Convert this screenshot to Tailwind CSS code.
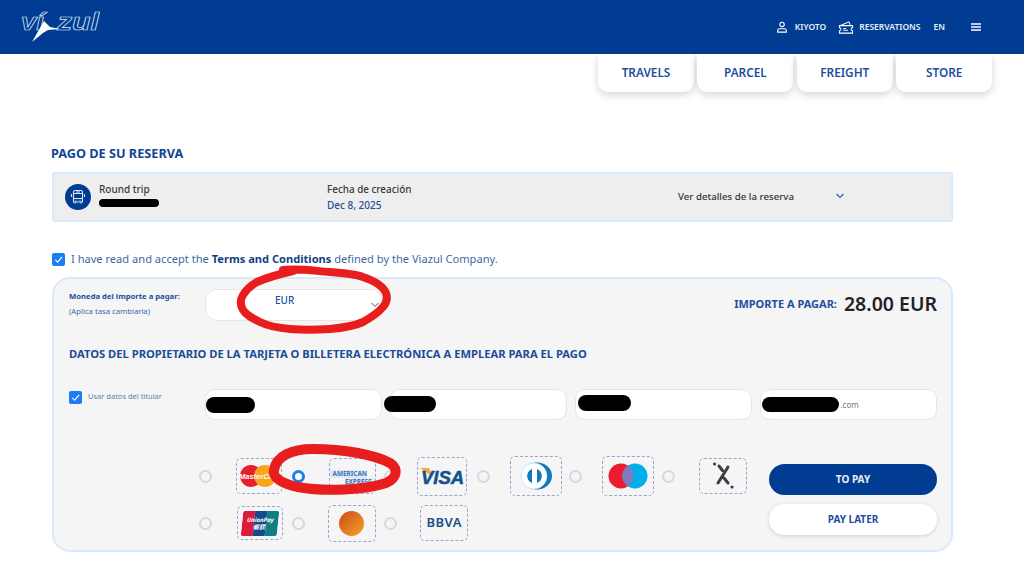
<!doctype html>
<html lang="en">
<head>
<meta charset="utf-8">
<script src="https://cdn.jsdelivr.net/npm/@tailwindcss/browser@4"></script>
<title>Viazul</title>
</head>
<body class="relative h-[573px] w-[1024px] overflow-hidden bg-white font-['Noto_Sans',sans-serif]">
<header class="flex h-[54px] items-center justify-between bg-[#003d92] pl-[20px] pr-[43px] text-white">
  <svg class="mt-[-2px] h-[34px] w-[80px]" viewBox="0 0 80 34">
    <text x="1" y="21" font-family="Liberation Sans" font-style="italic" font-weight="700" font-size="24" textLength="23" lengthAdjust="spacingAndGlyphs" fill="none" stroke="#dfe8f5" stroke-width=".7">ví</text>
    <text x="37" y="21" font-family="Liberation Sans" font-style="italic" font-weight="700" font-size="24" textLength="42" lengthAdjust="spacingAndGlyphs" fill="none" stroke="#dfe8f5" stroke-width=".7">zul</text>
    <path d="M12 33 L24 12 L30 18 L40 20 L28 21 L23 24 Z" fill="#fff"/>
  </svg>
  <div class="flex items-center text-[8.500px] font-semibold text-[#e8eef8]">
    <svg class="h-[12px] w-[12px]" viewBox="0 0 14 14" fill="none" stroke="#fff" stroke-width="1.3"><circle cx="7" cy="4" r="2.6"/><path d="M2 13V11q0-2 2-2h6q2 0 2 2v2z"/></svg>
    <span class="ml-[7px]">KIYOTO</span>
    <svg class="ml-[12px] h-[15px] w-[16px]" viewBox="0 0 16 16" fill="none" stroke="#fff" stroke-width="1.1"><path d="M1 6.500 11 2l1.500 3"/><path d="M1 6h14v2.200a1.600 1.600 0 0 0 0 3.200V14H1v-2.600a1.600 1.600 0 0 0 0-3.200z"/><path d="M5 9h3M5 11h5"/></svg>
    <span class="ml-[5px]">RESERVATIONS</span>
    <span class="ml-[13px]">EN</span>
    <svg class="ml-[26px] h-[10px] w-[10px]" viewBox="0 0 10 10" fill="none" stroke="#fff" stroke-width="1.300"><path d="M0 2h10M0 5h10M0 8h10"/></svg>
  </div>
</header>

<nav class="ml-[598px] flex gap-[3.400px] text-[11.800px] font-semibold text-[#1d4f9c]">
  <a class="flex h-[38px] w-[96px] items-center justify-center rounded-b-[10px] bg-white shadow-[0_3px_8px_rgba(0,0,0,0.16)]">TRAVELS</a>
  <a class="flex h-[38px] w-[96px] items-center justify-center rounded-b-[10px] bg-white shadow-[0_3px_8px_rgba(0,0,0,0.16)]">PARCEL</a>
  <a class="flex h-[38px] w-[96px] items-center justify-center rounded-b-[10px] bg-white shadow-[0_3px_8px_rgba(0,0,0,0.16)]">FREIGHT</a>
  <a class="flex h-[38px] w-[96px] items-center justify-center rounded-b-[10px] bg-white shadow-[0_3px_8px_rgba(0,0,0,0.16)]">STORE</a>
</nav>

<main class="mx-[52px] w-[901px]">
  <h1 class="mt-[52px] ml-[-1px] text-[12.700px] leading-[18px] font-bold text-[#0f4594]">PAGO DE SU RESERVA</h1>

  <section class="mt-[10px] flex h-[50px] items-center rounded-[3px] border-2 border-[#d9eafc] bg-[#eeeeee] pl-[11px] text-[10px]">
    <span class="flex h-[26px] w-[26px] items-center justify-center rounded-full bg-[#003d92]">
      <svg class="h-[16px] w-[16px]" viewBox="0 0 16 16" fill="none" stroke="#dce7f5" stroke-width="1.100"><path d="M3.500 3q0-1.500 1.500-1.500h6q1.500 0 1.500 1.500v10h-9z"/><path d="M3.500 4.500h9M3.500 9.500h9M6 3h4M1.500 5v3M14.500 5v3M5 13v1.500M11 13v1.500M5.500 11.300h1M9.500 11.300h1"/></svg>
    </span>
    <div class="ml-[8px] w-[228px] leading-[15px]">
      <p class="mt-[1px] font-medium text-[#3a3a3a]">Round trip</p>
      <p class="mt-[2px] h-[15px]"><span class="mt-[2px] block h-[8px] w-[60px] rounded-full bg-black"></span></p>
    </div>
    <div class="w-[351px] leading-[15px]">
      <p class="text-[9.900px] font-medium text-[#3a3a3a]">Fecha de creación</p>
      <p class="mt-[1px] font-medium text-[#1d4f9c]">Dec 8, 2025</p>
    </div>
    <span class="w-[157px] text-[9.700px] font-medium text-[#333]">Ver detalles de la reserva</span>
    <svg class="mt-[-2px] h-[8px] w-[10px]" viewBox="0 0 10 8" fill="none" stroke="#2a62ad" stroke-width="1.200"><path d="m1.500 2 3.500 3.500L8.500 2"/></svg>
  </section>

  <label class="mt-[29px] flex h-[16px] items-center text-[11.100px] text-[#3d689f]">
    <span class="flex h-[13px] w-[13px] items-center justify-center rounded-[2px] bg-[#1a7ff5]"><svg class="h-[9px] w-[9px]" viewBox="0 0 10 10" fill="none" stroke="#fff" stroke-width="1.300"><path d="m1.500 5.500 2.500 2.500 5-6"/></svg></span>
    <span class="ml-[6px]">I have read and accept the <b class="font-bold text-[#123f84]">Terms and Conditions</b> defined by the Viazul Company.</span>
  </label>

  <section class="mt-[10px] h-[275px] rounded-[18px] border-2 border-[#d9eafc] bg-[#f5f5f5] pl-[15px] pr-[14px] pt-[7px]">
    <div class="flex h-[35px] items-center">
      <div class="w-[136px] text-[7.700px] leading-[15px] text-[#376aa8]">
        <p class="font-bold text-[#1d4f9c]">Moneda del importe a pagar:</p>
        <p>(Aplica tasa cambiaria)</p>
      </div>
      <div class="relative mt-[3px] flex h-[32px] w-[178px] items-center rounded-[12px] border border-[#e6e6e6] bg-white pl-[69px] text-[10px] font-medium text-[#1d4f9c]">
        <span class="mt-[-9px]">EUR</span>
        <svg class="absolute right-[2px] top-[11px] h-[8px] w-[10px]" viewBox="0 0 10 8" fill="none" stroke="#555" stroke-width="1"><path d="m1.500 2 3.500 3.500L8.500 2"/></svg>
      </div>
      <div class="ml-auto flex items-center">
        <span class="mt-[1px] text-[11px] font-bold text-[#1d4f9c]">IMPORTE A PAGAR:</span>
        <span class="ml-[7px] text-[19.500px] leading-[24px] font-semibold text-[#222]">28.00 EUR</span>
      </div>
    </div>

    <h2 class="mt-[25px] text-[11.200px] leading-[16px] font-bold text-[#1a4c98]">DATOS DEL PROPIETARIO DE LA TARJETA O BILLETERA ELECTRÓNICA A EMPLEAR PARA EL PAGO</h2>

    <div class="mt-[27px] flex h-[31px]">
      <label class="flex h-[16px] w-[136px] items-center text-[7.500px] text-[#5a80b0]">
        <span class="flex h-[13px] w-[13px] items-center justify-center rounded-[2px] bg-[#1a7ff5]"><svg class="h-[9px] w-[9px]" viewBox="0 0 10 10" fill="none" stroke="#fff" stroke-width="1.300"><path d="m1.500 5.500 2.500 2.500 5-6"/></svg></span>
        <span class="ml-[6px]">Usar datos del titular</span>
      </label>
      <div class="grid w-[732px] grid-cols-4 gap-[8.600px]">
        <div class="flex items-center rounded-[10px] border border-[#e6e6e6] bg-white"><span class="block h-[16px] w-[49px] rounded-full bg-black"></span></div>
        <div class="flex items-center rounded-[10px] border border-[#e6e6e6] bg-white"><span class="ml-[-7px] mt-[-1px] block h-[16px] w-[52px] rounded-full bg-black"></span></div>
        <div class="flex items-center rounded-[10px] border border-[#e6e6e6] bg-white"><span class="ml-[2px] mt-[-4px] block h-[16px] w-[53px] rounded-full bg-black"></span></div>
        <div class="flex items-center rounded-[10px] border border-[#e6e6e6] bg-white text-[8px] text-[#777]"><span class="ml-[1px] block h-[15px] w-[77px] rounded-full bg-black"></span><span class="ml-[1px]">.com</span></div>
      </div>
    </div>

    <div class="flex">
      <div class="ml-[130px] mt-[36px] grid w-[556px] grid-cols-[repeat(6,92.600px)] grid-rows-[40px_34px] gap-y-[10px]">
        <div class="flex items-center"><span class="h-[13px] w-[13px] rounded-full border-2 border-[#d5d9de]"></span>
          <span class="ml-[24px] flex h-[36px] w-[46px] items-center justify-center rounded-[5px] border border-dashed border-[#98a3d6]">
            <svg class="h-[24px] w-[44px]" viewBox="0 0 44 24"><circle cx="14" cy="12" r="11" fill="#e5202e"/><circle cx="28" cy="12" r="11" fill="#f9a51a"/><text x="2" y="15" font-family="Liberation Sans" font-size="7.500" font-style="italic" font-weight="700" fill="#fff">MasterCard</text></svg>
          </span></div>
        <div class="flex items-center"><span class="h-[13px] w-[13px] rounded-full border-[3px] border-[#1a7ff5] bg-white"></span>
          <span class="ml-[24px] flex h-[36px] w-[47px] flex-col items-center justify-center rounded-[5px] border border-dashed border-[#98a3d6] pt-[4px] text-[6.400px] leading-[8px] font-bold text-[#3f74b8]">
            <span class="self-start bg-[#dfe8f4] pl-[3px]">AMERICAN</span><span class="self-end bg-[#dfe8f4] pr-[3px]">EXPRESS</span>
          </span></div>
        <div class="flex items-center"><span class="h-[13px] w-[13px] rounded-full border-2 border-[#d5d9de]"></span>
          <span class="ml-[20px] flex h-[39px] w-[50px] items-center justify-center rounded-[5px] border border-dashed border-[#98a3d6]">
            <svg class="h-[22px] w-[46px]" viewBox="0 0 46 22"><path d="M1 3h9l4 9z" fill="#f2a83a"/><text x="2" y="19" font-family="Liberation Sans" font-size="18.500" font-style="italic" font-weight="700" fill="#14508f" stroke="#14508f" stroke-width=".5">VISA</text></svg>
          </span></div>
        <div class="flex items-center"><span class="h-[13px] w-[13px] rounded-full border-2 border-[#d5d9de]"></span>
          <span class="ml-[20px] flex h-[40px] w-[52px] items-center justify-center rounded-[5px] border border-dashed border-[#98a3d6]">
            <svg class="h-[28px] w-[32px]" viewBox="0 0 32 28"><ellipse cx="17" cy="14" rx="15" ry="13.500" fill="#0f79ba"/><circle cx="14" cy="14" r="13" fill="#fff" stroke="#b9d8ea" stroke-width=".6"/><path d="M12 7a7.500 7.500 0 0 0 0 14zM17 7a7.500 7.500 0 0 1 0 14z" fill="#0f79ba"/></svg>
          </span></div>
        <div class="flex items-center"><span class="h-[13px] w-[13px] rounded-full border-2 border-[#d5d9de]"></span>
          <span class="ml-[20px] flex h-[40px] w-[52px] items-center justify-center rounded-[5px] border border-dashed border-[#98a3d6]">
            <svg class="h-[26px] w-[40px]" viewBox="0 0 40 26"><circle cx="13" cy="13" r="12.500" fill="#eb1c2d"/><circle cx="27" cy="13" r="12.500" fill="#00aeea"/><path d="M20 2.500a12.500 12.500 0 0 1 0 21 12.500 12.500 0 0 1 0-21z" fill="#7e7cbd"/></svg>
          </span></div>
        <div class="flex items-center"><span class="h-[13px] w-[13px] rounded-full border-2 border-[#d5d9de]"></span>
          <span class="ml-[24px] flex h-[36px] w-[48px] items-center justify-center rounded-[5px] border border-dashed border-[#98a3d6]">
            <svg class="h-[34px] w-[46px]" viewBox="699 460 46 34" fill="none" stroke="#3d3d42" stroke-linecap="round" stroke-width="3"><path d="M713.500 465h.1M718 467l3.500 4.500M717 484l10-16M723 479l4 5M731 488h.1"/></svg>
          </span></div>

        <div class="flex items-center"><span class="h-[13px] w-[13px] rounded-full border-2 border-[#d5d9de]"></span>
          <span class="ml-[25px] flex h-[34px] w-[46px] items-center justify-center rounded-[5px] border border-dashed border-[#98a3d6]">
            <span class="relative flex h-[25px] w-[36px] skew-x-[-6deg] overflow-hidden rounded-[2px] text-[6px] font-bold italic text-white">
              <span class="w-1/3 bg-[#dd1a3c]"></span><span class="w-1/3 bg-[#124a8c]"></span><span class="w-1/3 bg-[#0d7f83]"></span>
              <span class="absolute inset-x-0 top-[6px] text-center leading-[7px]">UnionPay<br>银联</span>
            </span>
          </span></div>
        <div class="flex items-center"><span class="h-[13px] w-[13px] rounded-full border-2 border-[#d5d9de]"></span>
          <span class="ml-[23px] flex h-[37px] w-[48px] items-center justify-center rounded-[5px] border border-dashed border-[#98a3d6]">
            <span class="h-[25px] w-[25px] rounded-full bg-gradient-to-br from-[#c9471b] to-[#f6a623]"></span>
          </span></div>
        <div class="flex items-center"><span class="h-[13px] w-[13px] rounded-full border-2 border-[#d5d9de]"></span>
          <span class="ml-[23px] flex h-[36px] w-[48px] items-center justify-center rounded-[5px] border border-dashed border-[#98a3d6] text-[13px] font-semibold tracking-[0.5px] text-[#1c4f87]">BBVA</span></div>
      </div>

      <div class="ml-[14px] mt-[44px] flex w-[168px] flex-col gap-[9px] text-[10px] font-bold">
        <button class="h-[31px] rounded-full bg-[#003d92] text-[#e8eef8]">TO PAY</button>
        <button class="h-[31px] rounded-full bg-white text-[#1d4f9c] shadow-[0_1px_4px_rgba(0,0,0,0.15)]">PAY LATER</button>
      </div>
    </div>
  </section>
</main>

<svg class="pointer-events-none absolute left-0 top-0 h-[573px] w-[1024px]" viewBox="0 0 1024 573" fill="none" stroke="#e81e1e" stroke-linecap="round" stroke-linejoin="round">
  <path stroke-width="8" d="M283 270C300 268 315 271 330 272C345 273 355 274 363 277C375 281 383 286 386 293C388 299 386 304 382 308C377 314 370 318 363 322C352 327 342 328 330 329C315 330 303 330 290 329C278 328 268 326 260 322C252 318 246 315 243 310C240 305 240 300 243 295C246 290 250 286 257 282C268 277 280 274 293 271"/>
  <path stroke-width="10" d="M274 470C276 456 292 449 313 449C345 449 375 455 390 463C399 469 397 478 386 483C365 490 325 492 298 487C283 484 272 478 274 470Z"/>
</svg>
</body>
</html>
